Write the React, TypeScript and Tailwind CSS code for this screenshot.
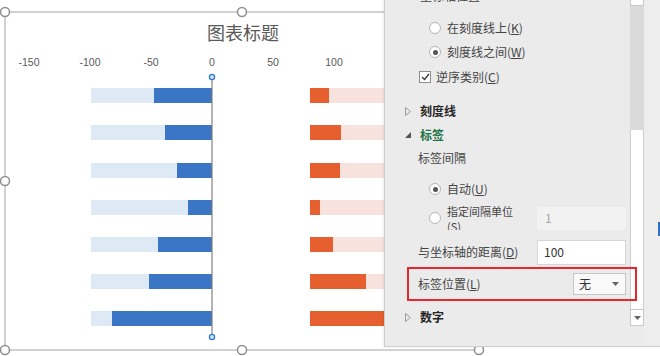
import React from 'react';

const font = { fontFamily: '"Noto Sans CJK SC", "Liberation Sans", sans-serif' };

const rows = [
  { y: 88, blue: 154, orange: 329 },
  { y: 125, blue: 165, orange: 341 },
  { y: 163, blue: 177, orange: 340 },
  { y: 200, blue: 188, orange: 320 },
  { y: 237, blue: 158, orange: 333 },
  { y: 274, blue: 149, orange: 366 },
  { y: 311, blue: 112, orange: 400 },
];

const ticks = [
  { x: 29, t: '-150' },
  { x: 90, t: '-100' },
  { x: 151, t: '-50' },
  { x: 212, t: '0' },
  { x: 273, t: '50' },
  { x: 334, t: '100' },
];

const handles = [
  [5, 12], [242, 12], [479, 12], [5, 181], [5, 350], [242, 350], [479, 350],
];

function Chart() {
  return (
    <svg width="660" height="356" className="block">
      <rect x="5" y="12" width="474" height="338" fill="#fff" stroke="#b4b4b4" strokeWidth="1.2" />
      <text x="243" y="40" textAnchor="middle" fontSize="18" fill="#595959" style={font}>
        图表标题
      </text>
      {ticks.map((k) => (
        <text
          key={k.t}
          x={k.x}
          y="66"
          textAnchor="middle"
          fontSize="10.5"
          fill="#595959"
          style={{ fontFamily: '"Liberation Sans", sans-serif' }}
        >
          {k.t}
        </text>
      ))}
      {rows.map((r) => (
        <g key={r.y}>
          <rect x="91" y={r.y} width={212 - 91} height="15" fill="#dde9f4" />
          <rect x={r.blue} y={r.y} width={212 - r.blue} height="15" fill="#3a76c5" />
          <rect x="310" y={r.y} width="170" height="15" fill="#f8e2dd" />
          <rect x="310" y={r.y} width={r.orange - 310} height="15" fill="#e65f2f" />
        </g>
      ))}
      <line x1="212" y1="77" x2="212" y2="337" stroke="#808080" strokeWidth="1.2" />
      <circle cx="212" cy="77" r="2.6" fill="#cfe3f7" stroke="#2e7ad1" strokeWidth="1.3" />
      <circle cx="212" cy="337" r="2.6" fill="#cfe3f7" stroke="#2e7ad1" strokeWidth="1.3" />
      {handles.map(([x, y]) => (
        <circle key={`${x}-${y}`} cx={x} cy={y} r="4.5" fill="#fff" stroke="#8f8f8f" strokeWidth="1.5" />
      ))}
    </svg>
  );
}

function Radio({ on }: { on?: boolean }) {
  return (
    <div className="w-[12px] h-[12px] rounded-full bg-white border border-[#b5b5b5] flex items-center justify-center shrink-0">
      {on && <div className="w-[5px] h-[5px] rounded-full bg-[#555]" />}
    </div>
  );
}

function Collapsed() {
  return (
    <svg width="6" height="9" viewBox="0 0 6 9" className="shrink-0">
      <polygon points="0.5,0.5 5.5,4.5 0.5,8.5" fill="none" stroke="#9a9a9a" strokeWidth="1" />
    </svg>
  );
}

function Expanded() {
  return (
    <svg width="6" height="6" viewBox="0 0 6 6" className="shrink-0">
      <polygon points="6,0 6,6 0,6" fill="#555" />
    </svg>
  );
}

function Pane() {
  return (
    <div className="absolute left-[384px] top-0 w-[276px] h-[347px] bg-[#ebebeb] border-l border-b border-[#cdcdcd] flex shadow-[-1px_0_2px_rgba(0,0,0,0.08)]">
      <div className="w-[245px] flex flex-col text-[12px] text-[#444]" style={font}>
        <div className="-mt-[13px] h-[18px] pl-[35px] flex items-center">坐标轴位置</div>
        <div className="mt-[11px] h-[24px] pl-[44px] flex items-center gap-[6px]">
          <Radio />
          <span>在刻度线上(<u>K</u>)</span>
        </div>
        <div className="h-[24px] pl-[44px] flex items-center gap-[6px]">
          <Radio on />
          <span>刻度线之间(<u>W</u>)</span>
        </div>
        <div className="mt-[1px] h-[24px] pl-[34px] flex items-center gap-[5px]">
          <div className="w-[12px] h-[12px] bg-white border border-[#8f8f8f] flex items-center justify-center">
            <svg width="9" height="8" viewBox="0 0 9 8">
              <polyline points="1,4 3.5,6.5 8,1" fill="none" stroke="#333" strokeWidth="1.2" />
            </svg>
          </div>
          <span>逆序类别(<u>C</u>)</span>
        </div>
        <div className="mt-[10px] h-[24px] pl-[20px] flex items-center gap-[9px]">
          <Collapsed />
          <span className="font-bold text-[#262626]">刻度线</span>
        </div>
        <div className="h-[23px] pl-[20px] flex items-center gap-[9px]">
          <Expanded />
          <span className="font-bold text-[#217346]">标签</span>
        </div>
        <div className="h-[24px] pl-[33px] flex items-center">标签间隔</div>
        <div className="mt-[7px] h-[24px] pl-[44px] flex items-center gap-[6px]">
          <Radio on />
          <span>自动(<u>U</u>)</span>
        </div>
        <div className="mt-[5px] h-[24px] pl-[44px] pr-[4px] flex items-center gap-[6px]">
          <Radio />
          <div className="w-[76px] h-[24px] overflow-hidden">
            <div className="-mt-[2px] leading-[15px] text-[11px]">指定间隔单位(<u>S</u>)</div>
          </div>
          <div className="ml-auto w-[89px] h-[23px] rounded-[3px] bg-[#f2f2f2] flex items-center pl-[8px] text-[#a8a8a8]">
            1
          </div>
        </div>
        <div className="mt-[9px] h-[26px] pl-[33px] pr-[4px] flex items-center">
          <span>与坐标轴的距离(<u>D</u>)</span>
          <div className="ml-auto w-[89px] h-[25px] bg-white border border-[#d6d6d6] flex items-center pl-[6px] text-[#333]">
            100
          </div>
        </div>
        <div className="mt-[2px] ml-[22px] w-[230px] h-[34px] border-2 border-[#e8262b] relative z-10 flex items-center pl-[9px] pr-[9px]">
          <span>标签位置(<u>L</u>)</span>
          <div className="ml-auto w-[53px] h-[22px] bg-[#f9f9f9] border border-[#c6c6c6] flex items-center pl-[5px] pr-[6px] text-[#333]">
            <span>无</span>
            <svg width="7" height="4" viewBox="0 0 7 4" className="ml-auto">
              <polygon points="0,0 7,0 3.5,4" fill="#666" />
            </svg>
          </div>
        </div>
        <div className="mt-[4px] h-[24px] pl-[20px] flex items-center gap-[9px]">
          <Collapsed />
          <span className="font-bold text-[#262626]">数字</span>
        </div>
      </div>
      <div className="w-[14px] flex flex-col">
        <div className="h-[6px] bg-white border border-t-0 border-[#c8c8c8]" />
        <div className="h-[124px] bg-[#dadada]" />
        <div className="h-[179px] bg-white border-x border-[#cfcfcf]" />
        <div className="h-[17px] bg-white border border-[#c8c8c8] flex items-center justify-center">
          <svg width="7" height="4" viewBox="0 0 7 4">
            <polygon points="0,0 7,0 3.5,4" fill="#666" />
          </svg>
        </div>
      </div>
      <div className="flex-1 relative bg-[#ededed]">
        <div className="absolute right-0 top-[222px] w-[2px] h-[14px] bg-[#2f6fc4]" />
      </div>
    </div>
  );
}

export default function App() {
  return (
    <div className="relative w-[660px] h-[356px] bg-white overflow-hidden">
      <Chart />
      <Pane />
    </div>
  );
}
